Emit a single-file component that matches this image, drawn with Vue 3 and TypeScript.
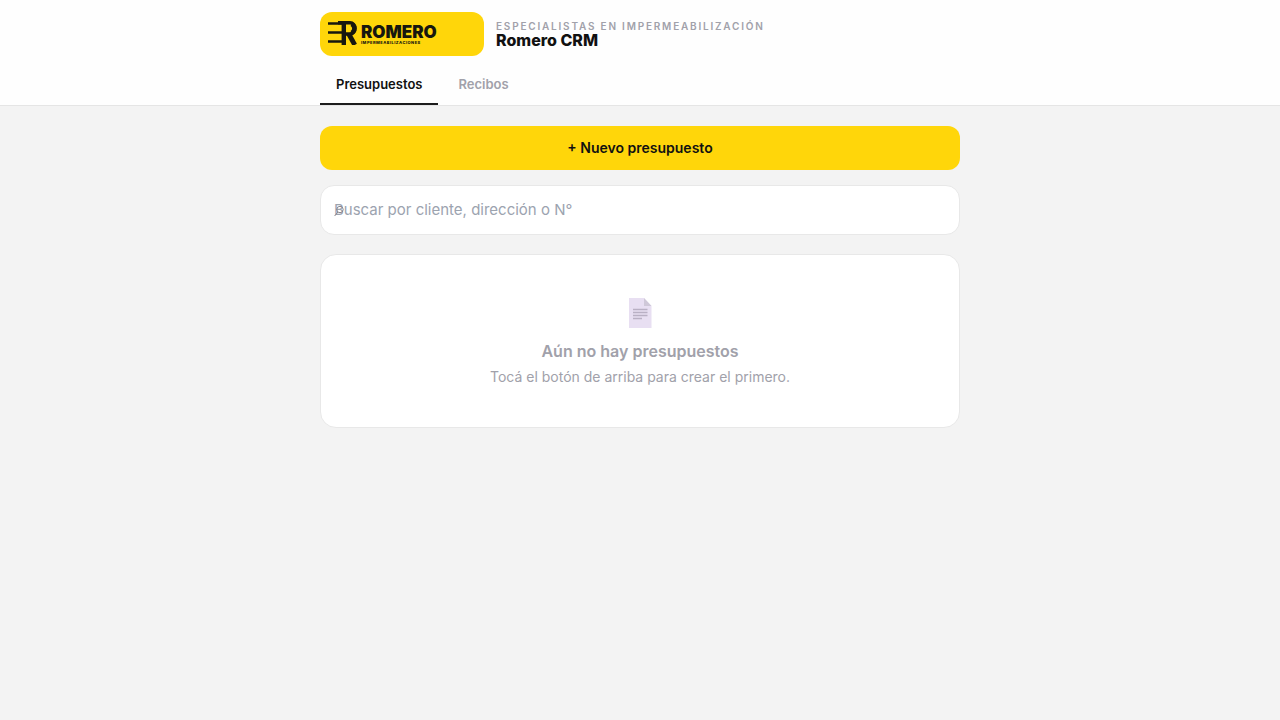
<script setup lang="ts">
import { computed, ref } from 'vue'

type TabId = 'presupuestos' | 'recibos'

interface Tab {
  id: TabId
  label: string
}

const tabs: Tab[] = [
  { id: 'presupuestos', label: 'Presupuestos' },
  { id: 'recibos', label: 'Recibos' },
]

const active = ref<TabId>('presupuestos')
const query = ref('')
const singular = computed(() => (active.value === 'presupuestos' ? 'presupuesto' : 'recibo'))
</script>

<template>
  <div class="app">
    <header class="header">
      <div class="container">
        <div class="brand">
          <div class="logo" role="img" aria-label="Romero Impermeabilizaciones">
            <svg class="mark" viewBox="0 0 30 24" aria-hidden="true">
              <g fill="none" stroke="#17170f">
                <path d="M0 2.5H16M0 11.5H16M0 20.5H16" stroke-width="2.5" />
                <path d="M15.8 0V24" stroke-width="4.4" />
                <path d="M10 1.8H22A5 5.6 0 0 1 22 13H17" stroke-width="3.6" />
                <path d="M23.5 3A5 5 0 0 1 23.5 12" stroke-width="4.4" />
                <path d="M20.5 12.5L26.8 24" stroke-width="4.8" />
              </g>
            </svg>
            <div class="wordmark">
              <span class="word">ROMERO</span>
              <span class="tagline">IMPERMEABILIZACIONES</span>
            </div>
          </div>
          <div class="titles">
            <p class="eyebrow">Especialistas en impermeabilización</p>
            <h1 class="title">Romero CRM</h1>
          </div>
        </div>
        <nav class="tabs">
          <button
            v-for="tab in tabs"
            :key="tab.id"
            type="button"
            class="tab"
            :class="{ 'tab-active': tab.id === active }"
            @click="active = tab.id"
          >
            {{ tab.label }}
          </button>
        </nav>
      </div>
    </header>

    <main class="container main">
      <button type="button" class="create">+ Nuevo {{ singular }}</button>
      <div class="search">
        <svg class="search-icon" viewBox="0 0 10 13" aria-hidden="true">
          <circle cx="6" cy="5.5" r="3.2" />
          <path d="M4 8L0.6 12" />
        </svg>
        <input
          v-model="query"
          type="text"
          class="search-input"
          aria-label="Buscar"
          placeholder="Buscar por cliente, dirección o N°"
        />
      </div>
      <section class="empty">
        <svg class="doc" viewBox="0 0 24 30" aria-hidden="true">
          <path d="M1 0H16L23.5 8V30H1Z" fill="#e8dff2" />
          <path d="M16 0L23.5 8H16Z" fill="#cfc8d8" />
          <path d="M5 11.5H19.5M5 14.5H19.5M5 17.5H19.5M5 20.5H14" stroke="#b9b0c4" stroke-width="1.4" />
        </svg>
        <h2 class="empty-title">Aún no hay {{ singular }}s</h2>
        <p class="empty-text">Tocá el botón de arriba para crear el primero.</p>
      </section>
    </main>
  </div>
</template>

<style>
body {
  margin: 0;
  background: #f3f3f3;
}
</style>

<style scoped>
.app {
  min-height: 100vh;
  background: #f3f3f3;
  color: #111111;
  font-family: Inter, "Liberation Sans", sans-serif;
}
.app * {
  box-sizing: border-box;
}
.header {
  background: #fefefe;
  border-bottom: 1px solid #e5e5e5;
}
.container {
  max-width: 640px;
  margin: 0 auto;
}
.brand {
  display: flex;
  align-items: center;
  gap: 12px;
  padding: 12px 0 8px;
}
.logo {
  display: flex;
  align-items: flex-start;
  gap: 3px;
  width: 164px;
  height: 44px;
  padding: 9px 8px;
  border-radius: 12px;
  background: #ffd60a;
  color: #17170f;
}
.mark {
  width: 30px;
  height: 24px;
}
.wordmark {
  display: flex;
  flex-direction: column;
  padding-top: 3px;
}
.word {
  font-size: 17px;
  line-height: 17px;
  font-weight: 900;
}
.tagline {
  font-size: 4px;
  line-height: 4px;
  font-weight: 800;
  letter-spacing: 0.12em;
}
.titles {
  display: flex;
  flex-direction: column;
}
.eyebrow {
  margin: 0;
  color: #a1a1aa;
  font-size: 10px;
  line-height: 12px;
  font-weight: 600;
  letter-spacing: 0.18em;
  text-transform: uppercase;
}
.title {
  margin: 0;
  font-size: 16px;
  line-height: 16px;
  font-weight: 800;
}
.tabs {
  display: flex;
  gap: 4px;
}
.tab {
  height: 41px;
  padding: 0 16px;
  border: 0;
  border-bottom: 2px solid transparent;
  background: transparent;
  color: #a1a1aa;
  font: inherit;
  font-size: 13px;
  font-weight: 600;
  cursor: pointer;
}
.tab-active {
  border-bottom-color: #1c1c1c;
  color: #111111;
}
.main {
  display: flex;
  flex-direction: column;
  padding: 20px 0;
}
.create {
  height: 44px;
  padding: 0 16px 2px;
  border: 0;
  border-radius: 12px;
  background: #ffd60a;
  color: #111111;
  font: inherit;
  font-size: 14px;
  font-weight: 600;
  cursor: pointer;
}
.search {
  position: relative;
  margin: 15px 0 19px;
}
.search-icon {
  position: absolute;
  left: 14px;
  top: 19px;
  width: 10px;
  height: 13px;
  fill: none;
  stroke: #85858e;
  stroke-width: 1;
}
.search-input {
  display: block;
  width: 100%;
  height: 50px;
  padding: 0 13px 2px;
  border: 1px solid #e8e8e8;
  border-radius: 14px;
  background: #ffffff;
  color: #111111;
  font: inherit;
  font-size: 15px;
}
.search-input::placeholder {
  color: #9ca3af;
  opacity: 1;
}
.empty {
  display: flex;
  flex-direction: column;
  align-items: center;
  padding: 43px 20px 40px;
  border: 1px solid #e8e8e8;
  border-radius: 16px;
  background: #ffffff;
  color: #a1a1aa;
  text-align: center;
}
.doc {
  width: 24px;
  height: 30px;
}
.empty-title {
  margin: 11px 0 4px;
  font-size: 16px;
  line-height: 24px;
  font-weight: 600;
}
.empty-text {
  margin: 0;
  font-size: 14px;
  line-height: 20px;
}
</style>
